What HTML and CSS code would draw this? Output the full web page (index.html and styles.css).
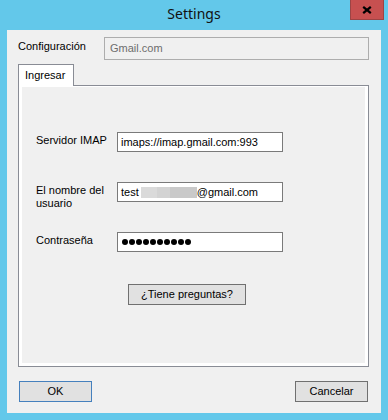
FILE: index.html
```html
<!DOCTYPE html>
<html lang="es">
<head>
  <meta charset="UTF-8">
  <meta name="viewport" content="width=device-width, initial-scale=1.0">
  <title>Settings</title>
  <link rel="stylesheet" href="styles.css">
</head>
<body>
  <div class="window">
    <!-- Barra del titulo -->
    <div class="titlebar">
      <span></span>
      <span class="title">Settings</span>
      <button class="close" aria-label="Cerrar">
        <svg width="10" height="8" viewBox="0 0 10 8">
          <path d="M1.2 0.8 L8.8 7.2 M8.8 0.8 L1.2 7.2" stroke="#000" stroke-width="2.2" fill="none"/>
        </svg>
      </button>
    </div>

    <div class="client">
      <div class="config-row">
        <span class="config-label">Configuración</span>
        <div class="config-box">Gmail.com</div>
      </div>

      <!-- Pestañas -->
      <div class="tabs">
        <div class="tab">Ingresar</div>
      </div>
      <div class="tab-panel">
        <div class="tab-page">
          <div class="fields">
            <span class="field-label">Servidor IMAP</span>
            <div class="field">imaps://imap.gmail.com:993</div>

            <span class="field-label">El nombre del<br>usuario</span>
            <div class="field">test<span class="blur"></span>@gmail.com</div>

            <span class="field-label">Contraseña</span>
            <div class="field password">
              <i></i><i></i><i></i><i></i><i></i><i></i><i></i><i></i><i></i><i></i>
            </div>
          </div>
          <button class="help">¿Tiene preguntas?</button>
        </div>
      </div>

      <div class="actions">
        <button class="btn ok">OK</button>
        <button class="btn">Cancelar</button>
      </div>
    </div>
  </div>
</body>
</html>
```

FILE: styles.css
```css
* {
  box-sizing: border-box;
}
body {
  margin: 0;
  background-color: #63c8ea;
  font-family: "Liberation Sans", Arial, sans-serif;
  font-size: 11px;
  line-height: 13px;
  color: #000;
}
.window {
  width: 388px;
  height: 420px;
}
.titlebar {
  height: 30px;
  display: grid;
  grid-template-columns: 1fr auto 1fr;
  align-items: start;
}
.title {
  font-family: "Noto Sans", sans-serif;
  font-size: 14px;
  line-height: 19px;
  padding-top: 4px;
  color: #111;
}
.close {
  justify-self: end;
  margin-right: 4px;
  width: 34px;
  height: 20px;
  padding: 0;
  border: 1px solid #9c4444;
  border-top: none;
  background-color: #c75050;
  display: flex;
  align-items: center;
  justify-content: center;
}
.client {
  margin: 0 7px;
  height: 383px;
  background-color: #f0f0f0;
  padding: 0 12px 0 11px;
}
.config-row {
  display: flex;
  padding-top: 7px;
  height: 30px;
}
.config-label {
  width: 86px;
  padding-top: 3px;
}
.config-box {
  width: 265px;
  height: 23px;
  border: 1px solid #adadad;
  color: #6d6d6d;
  padding-left: 5px;
  line-height: 21px;
}
.tabs {
  display: flex;
  margin-top: 4px;
}
.tab {
  position: relative;
  z-index: 1;
  width: 56px;
  height: 22px;
  margin-bottom: -1px;
  background-color: #fff;
  border: 1px solid #898c95;
  border-bottom: none;
  padding: 4px 0 0 6px;
}
.tab-panel {
  height: 282px;
  border: 1px solid #898c95;
  background-color: #fff;
  padding: 1px 3px 3px 3px;
  display: flex;
}
.tab-page {
  flex: 1;
  background-color: #f0f0f0;
  padding: 45px 0 0 14px;
}
.fields {
  display: grid;
  grid-template-columns: 81px 166px;
  grid-auto-rows: 20px;
  row-gap: 30px;
}
.field-label {
  padding-top: 2px;
}
.field {
  height: 20px;
  border: 1px solid #7a7a7a;
  background-color: #fff;
  padding-left: 3px;
  line-height: 18px;
  white-space: nowrap;
}
.blur {
  display: inline-block;
  width: 56px;
  height: 11px;
  margin-left: 2px;
  vertical-align: -2px;
  background: linear-gradient(to right, #dadada 0 28%, #d3d3d3 28% 52%, #c9c9c9 52% 100%);
}
.password {
  display: flex;
  align-items: center;
  gap: 1px;
  padding-left: 4px;
}
.password i {
  width: 6px;
  height: 6px;
  border-radius: 50%;
  background-color: #000;
}
.help {
  display: block;
  margin: 32px 0 0 92px;
  width: 118px;
  height: 21px;
  border: 1px solid #707070;
  background-color: #e1e1e1;
  font: inherit;
  color: #000;
  padding: 0;
}
.actions {
  display: flex;
  justify-content: space-between;
  margin-top: 14px;
  padding: 0 1px;
}
.btn {
  width: 73px;
  height: 21px;
  border: 1px solid #707070;
  background-color: #e1e1e1;
  font: inherit;
  color: #000;
  padding: 0;
}
.btn.ok {
  border-color: #4580bd;
}
```
